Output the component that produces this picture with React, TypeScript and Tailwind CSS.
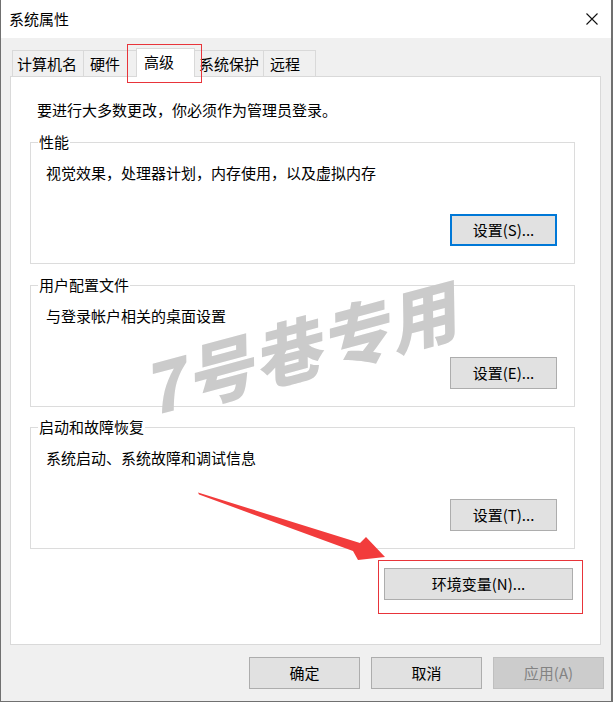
import React from "react";

function Btn({ children, w, focused, disabled }: { children: React.ReactNode; w: string; focused?: boolean; disabled?: boolean }) {
  const base = "h-[32px] flex items-center justify-center text-[15px] leading-[20px] shrink-0";
  const look = disabled
    ? "bg-[#cccccc] border border-[#bfbfbf] text-[#838383]"
    : focused
    ? "bg-[#e1e1e1] border-2 border-[#0078d7] text-black"
    : "bg-[#e1e1e1] border border-[#adadad] text-black";
  return <div className={`${base} ${look} ${w}`}>{children}</div>;
}

function Group({ label, desc, btn, focused, className }: { label: string; desc: string; btn: string; focused?: boolean; className: string }) {
  return (
    <div className={`relative w-[545px] border border-[#dcdcdc] flex flex-col pt-[20px] pb-[17px] ${className}`}>
      <span className="absolute left-[7px] top-[-11px] bg-white px-[1px] text-[15px] leading-[20px]">{label}</span>
      <div className="pl-[15px] text-[15px] leading-[20px]">{desc}</div>
      <div className="mt-[31px] flex justify-end pr-[17px]">
        <Btn w="w-[107px]" focused={focused}>{btn}</Btn>
      </div>
    </div>
  );
}

export default function App() {
  return (
    <div className="relative w-[613px] h-[702px] bg-[#f0f0f0] border-l border-r-2 border-b border-[#707070] flex flex-col overflow-hidden text-black font-['Noto_Sans_CJK_SC','Noto_Sans',sans-serif]">
      {/* title bar */}
      <div className="h-[38px] shrink-0 bg-white flex items-center justify-between pl-[8px] pr-[13px]">
        <span className="text-[15px] leading-[20px]">系统属性</span>
        <svg width="12" height="12" viewBox="0 0 12 12">
          <path d="M0.5 0.5L11.5 11.5M11.5 0.5L0.5 11.5" stroke="#111" strokeWidth="1.1" />
        </svg>
      </div>

      <div className="flex-1 flex flex-col pl-[9px] pr-[10px]">
        {/* tabs */}
        <div className="h-[38px] shrink-0 flex items-end pl-[2px]">
          <div className="w-[71px] h-[26px] border-l border-t border-[#d9d9d9] pl-[4px] flex items-center text-[15px] leading-[20px]">计算机名</div>
          <div className="w-[53px] h-[26px] border-l border-t border-[#d9d9d9] pl-[6px] flex items-center text-[15px] leading-[20px]">硬件</div>
          <div className="relative z-10 w-[59px] h-[29px] mb-[-1px] bg-white border-l border-r border-t border-[#d9d9d9] pl-[7px] pb-[2px] flex items-center text-[15px] leading-[20px]">高级</div>
          <div className="w-[69px] h-[26px] border-r border-t border-[#d9d9d9] pl-[4px] flex items-center text-[15px] leading-[20px]">系统保护</div>
          <div className="w-[52px] h-[26px] border-r border-t border-[#d9d9d9] pl-[6px] flex items-center text-[15px] leading-[20px]">远程</div>
        </div>

        {/* panel */}
        <div className="flex-1 bg-white border border-[#d9d9d9] flex flex-col pt-[23px] px-[19px]">
          <div className="pl-[7px] text-[15px] leading-[20px]">要进行大多数更改，你必须作为管理员登录。</div>
          <Group className="mt-[22px]" label="性能" desc="视觉效果，处理器计划，内存使用，以及虚拟内存" btn="设置(S)..." focused />
          <Group className="mt-[21px]" label="用户配置文件" desc="与登录帐户相关的桌面设置" btn="设置(E)..." />
          <Group className="mt-[20px]" label="启动和故障恢复" desc="系统启动、系统故障和调试信息" btn="设置(T)..." />
          <div className="w-[545px] mt-[19px] flex justify-end pr-[2px]">
            <Btn w="w-[189px]">环境变量(N)...</Btn>
          </div>
        </div>

        {/* bottom buttons */}
        <div className="h-[56px] shrink-0 pt-[12px] flex justify-end gap-[11px] mr-[-3px]">
          <Btn w="w-[111px]">确定</Btn>
          <Btn w="w-[111px]">取消</Btn>
          <Btn w="w-[111px]" disabled>应用(A)</Btn>
        </div>
      </div>

      {/* watermark */}
      <div className="absolute left-[128px] top-[302px] w-[340px] h-[90px] flex items-center justify-center rotate-[-15deg] text-[68px] leading-[90px] font-black italic tracking-[2px] text-[#cbcbcb] pointer-events-none">
        7号巷专用
      </div>

      {/* annotations */}
      <div className="absolute left-[126px] top-[44px] w-[75px] h-[39px] border border-[#e8343a] pointer-events-none" />
      <div className="absolute left-[377px] top-[560px] w-[205px] h-[54px] border border-[#e8343a] pointer-events-none" />
      <svg className="absolute left-0 top-0 pointer-events-none" width="613" height="702" viewBox="0 0 613 702">
        <polygon points="197,492.5 359,543 365,537 384,557 357,560 352,551 198,494.5" fill="#f23c3c" />
      </svg>
    </div>
  );
}
